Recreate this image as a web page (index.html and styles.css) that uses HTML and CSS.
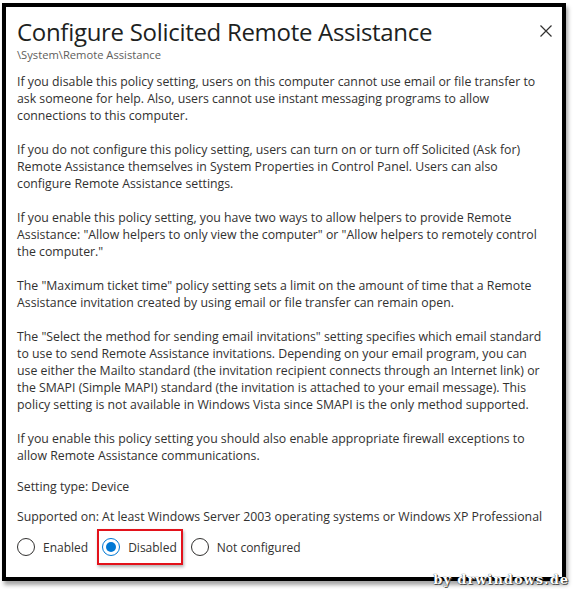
FILE: index.html
```html
<!DOCTYPE html>
<html lang="en">
<head>
  <meta charset="UTF-8" />
  <title>Configure Solicited Remote Assistance</title>
  <link rel="stylesheet" href="styles.css">
</head>
<body>
<div class="dialog">
  <div class="header">
    <div class="titles">
      <h1>Configure Solicited Remote Assistance</h1>
      <div class="path">\System\Remote Assistance</div>
    </div>
    <button class="close" aria-label="Close">
      <svg width="12" height="12" viewBox="0 0 12 12"><path d="M0.5 0.5L11.5 11.5M11.5 0.5L0.5 11.5" stroke="#323130" stroke-width="1.2" fill="none"/></svg>
    </button>
  </div>

  <div class="content">
    <p>If you disable this policy setting, users on this computer cannot use email or file transfer to<br>ask someone for help. Also, users cannot use instant messaging programs to allow<br>connections to this computer.</p>
    <p>If you do not configure this policy setting, users can turn on or turn off Solicited (Ask for)<br>Remote Assistance themselves in System Properties in Control Panel. Users can also<br>configure Remote Assistance settings.</p>
    <p>If you enable this policy setting, you have two ways to allow helpers to provide Remote<br>Assistance: "Allow helpers to only view the computer" or "Allow helpers to remotely control<br>the computer."</p>
    <p>The "Maximum ticket time" policy setting sets a limit on the amount of time that a Remote<br>Assistance invitation created by using email or file transfer can remain open.</p>
    <p>The "Select the method for sending email invitations" setting specifies which email standard<br>to use to send Remote Assistance invitations. Depending on your email program, you can<br>use either the Mailto standard (the invitation recipient connects through an Internet link) or<br>the SMAPI (Simple MAPI) standard (the invitation is attached to your email message). This<br>policy setting is not available in Windows Vista since SMAPI is the only method supported.</p>
    <p class="last">If you enable this policy setting you should also enable appropriate firewall exceptions to<br>allow Remote Assistance communications.</p>
    <p class="meta">Setting type: Device</p>
    <p class="meta supported">Supported on: At least Windows Server 2003 operating systems or Windows XP Professional</p>

    <div class="options">
      <label class="option"><span class="radio"></span>Enabled</label>
      <label class="option marked"><span class="radio checked"></span>Disabled</label>
      <label class="option"><span class="radio"></span>Not configured</label>
    </div>
  </div>
</div>
<div class="watermark">by drwindows.de</div>
</body>
</html>
```

FILE: styles.css
```css
body {
  margin: 0;
  background: #fff;
  font-family: "Open Sans", "Noto Sans", sans-serif;
  color: #323130;
  position: relative;
  height: 589px;
  overflow: hidden;
}

.dialog {
  margin: 3px 7px 0 2px;
  height: 570px;
  border: 4px solid #000;
  background: #fff;
  box-shadow: 2px 4px 4px rgba(0, 0, 0, 0.35);
}

.header {
  display: flex;
  justify-content: space-between;
  padding: 9px 10px 0 11px;
}

h1 {
  margin: 0;
  font-size: 24px;
  font-weight: 400;
  line-height: 32px;
  color: #201f1e;
  letter-spacing: -0.3px;
}

.path {
  font-size: 11.2px;
  line-height: 14px;
  color: #605e5c;
  margin-top: 0;
}

.close {
  background: none;
  border: none;
  padding: 0;
  margin-top: 9px;
  width: 12px;
  height: 12px;
  cursor: pointer;
}

.content {
  padding: 11px 11px 0 11px;
  font-size: 12.3px;
  line-height: 17px;
}

.content p {
  margin: 0 0 17px 0;
  white-space: nowrap;
}

.content p.last {
  margin-bottom: 14px;
}

.content p.meta {
  margin-bottom: 13px;
}

.options {
  display: flex;
  align-items: center;
  gap: 14px;
  margin-top: 11px;
  font-size: 12px;
}

.option {
  display: flex;
  align-items: center;
  gap: 8px;
  position: relative;
}

.radio {
  width: 16px;
  height: 16px;
  border: 1px solid #323130;
  border-radius: 50%;
  display: flex;
  align-items: center;
  justify-content: center;
}

.radio.checked {
  border-color: #0078d4;
}

.radio.checked::after {
  content: "";
  width: 10px;
  height: 10px;
  border-radius: 50%;
  background: #0078d4;
}

.marked::before {
  content: "";
  position: absolute;
  left: -5px;
  right: -6px;
  top: -9px;
  bottom: -9px;
  border: 2px solid #e3121b;
  box-shadow: 1px 2px 3px rgba(0, 0, 0, 0.3);
}

.watermark {
  position: absolute;
  right: 4px;
  top: 572px;
  font-family: "DejaVu Serif", serif;
  font-size: 13px;
  font-weight: bold;
  color: #fff;
  text-shadow: 0 0 1px #000, 1px 1px 0 #555;
  letter-spacing: 1px;
}
```
